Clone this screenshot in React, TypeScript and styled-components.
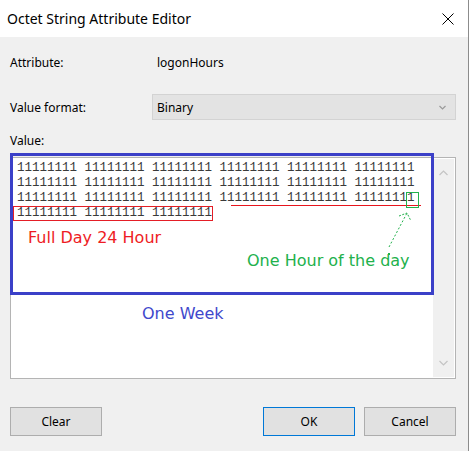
import React from "react";
import styled, { createGlobalStyle } from "styled-components";

const Global = createGlobalStyle`
  html, body { margin: 0; padding: 0; background: #ffffff; }
  body { width: 470px; height: 451px; overflow: hidden; }
`;

const Window = styled.div`
  position: relative;
  width: 468px;
  height: 451px;
  border-right: 1px solid #8c8c8c;
  display: flex;
  flex-direction: column;
  font-family: "Noto Sans", "Liberation Sans", sans-serif;
  font-size: 12px;
  color: #000;
`;

const TitleBar = styled.div`
  height: 37px;
  background: #ffffff;
  display: flex;
  align-items: center;
  justify-content: space-between;
  padding: 0 14px 0 7px;
  box-sizing: border-box;
`;

const Title = styled.div`
  font-size: 14px;
  color: #000;
`;

const Body = styled.div`
  flex: 1;
  background: #f0f0f0;
  padding: 16px 12px 0 10px;
  display: flex;
  flex-direction: column;
`;

const Row = styled.div<{ $h: number; $mb: number }>`
  display: flex;
  align-items: center;
  height: ${(p) => p.$h}px;
  margin-bottom: ${(p) => p.$mb}px;
`;

const Label = styled.div<{ $w?: number }>`
  width: ${(p) => p.$w ?? 147}px;
  flex: none;
`;

const Select = styled.div`
  flex: 1;
  height: 26px;
  box-sizing: border-box;
  border: 1px solid #d3d3d3;
  background: #e3e3e3;
  display: flex;
  align-items: center;
  justify-content: space-between;
  padding: 0 9px 0 4px;
`;

const Field = styled.div`
  height: 222px;
  box-sizing: border-box;
  border: 1px solid #b4b4b4;
  background: #fff;
  display: flex;
`;

const Content = styled.pre`
  flex: 1;
  margin: 0;
  padding: 3px 0 0 6px;
  font-family: "Liberation Mono", "Courier New", monospace;
  font-size: 12.5px;
  line-height: 15px;
  color: #3a3a3a;
  white-space: pre;
`;

const ScrollBar = styled.div`
  width: 21px;
  background: #f0f0f0;
  margin: 1px 1px 1px 0;
  display: flex;
  flex-direction: column;
  justify-content: space-between;
  align-items: center;
  padding: 11px 0;
  box-sizing: border-box;
`;

const Buttons = styled.div`
  display: flex;
  margin-top: 28px;
  gap: 9px;
`;

const Button = styled.div<{ $default?: boolean }>`
  width: 92px;
  height: 29px;
  box-sizing: border-box;
  border: 1px solid ${(p) => (p.$default ? "#0078d7" : "#adadad")};
  background: #e1e1e1;
  display: flex;
  align-items: center;
  justify-content: center;
`;

const Spacer = styled.div`
  flex: 1;
`;

const Note = styled.div<{ $x: number; $y: number; $c: string }>`
  position: absolute;
  left: ${(p) => p.$x}px;
  top: ${(p) => p.$y}px;
  color: ${(p) => p.$c};
  font-family: "DejaVu Sans", Verdana, sans-serif;
  font-size: 16px;
  line-height: 19px;
  white-space: nowrap;
`;

const Overlay = styled.svg`
  position: absolute;
  left: 0;
  top: 0;
  pointer-events: none;
`;

const Chevron = ({ up, color, w = 9 }: { up?: boolean; color: string; w?: number }) => (
  <svg width={w} height={Math.ceil(w / 2) + 1} viewBox={`0 0 ${w} ${Math.ceil(w / 2) + 1}`}>
    <path
      d={up ? `M0.5 ${w / 2 + 0.5} L${w / 2} 1 L${w - 0.5} ${w / 2 + 0.5}` : `M0.5 1 L${w / 2} ${w / 2 + 0.5} L${w - 0.5} 1`}
      fill="none"
      stroke={color}
      strokeWidth="1.2"
    />
  </svg>
);

const group = "11111111";
const line = [group, group, group, group, group, group].join(" ");
const text = [line, line, line, [group, group, group].join(" ")].join("\n");

export default function App() {
  return (
    <>
      <Global />
      <Window>
        <TitleBar>
          <Title>Octet String Attribute Editor</Title>
          <svg width="12" height="12" viewBox="0 0 12 12">
            <path d="M0.5 0.5 L11.5 11.5 M11.5 0.5 L0.5 11.5" stroke="#000" strokeWidth="1" />
          </svg>
        </TitleBar>
        <Body>
          <Row $h={18} $mb={23}>
            <Label>Attribute:</Label>
            <div>logonHours</div>
          </Row>
          <Row $h={26} $mb={11}>
            <Label $w={142}>Value format:</Label>
            <Select>
              <span>Binary</span>
              <Chevron color="#9a9a9a" w={7} />
            </Select>
          </Row>
          <Row $h={18} $mb={8}>
            <Label>Value:</Label>
          </Row>
          <Field>
            <Content>{text}</Content>
            <ScrollBar>
              <Chevron up color="#c4c4c4" />
              <Chevron color="#c4c4c4" />
            </ScrollBar>
          </Field>
          <Buttons>
            <Button>Clear</Button>
            <Spacer />
            <Button $default>OK</Button>
            <Button>Cancel</Button>
          </Buttons>
        </Body>
        <Overlay width="470" height="451" viewBox="0 0 470 451">
          <rect x="11.5" y="154.5" width="421" height="139" fill="none" stroke="#3b40c8" strokeWidth="3" />
          <rect x="13.5" y="206.5" width="199" height="14" fill="none" stroke="#e41e26" strokeWidth="1" shapeRendering="crispEdges" />
          <rect x="231" y="205" width="190" height="1.2" fill="#e8141c" shapeRendering="crispEdges" />
          <rect x="406.5" y="192.5" width="12" height="15" fill="none" stroke="#22b14c" strokeWidth="1" shapeRendering="crispEdges" />
          <line x1="389" y1="247" x2="407" y2="213" stroke="#22b14c" strokeWidth="1" strokeDasharray="2 2" />
          <path d="M399 216 L407 213 L411 221" fill="none" stroke="#22b14c" strokeWidth="1" strokeDasharray="2 1.5" />
          <rect x="388" y="253" width="2" height="2" fill="#22b14c" />
        </Overlay>
        <Note $x={28} $y={228} $c="#ee1c24">Full Day 24 Hour</Note>
        <Note $x={247} $y={251} $c="#22b14c">One Hour of the day</Note>
        <Note $x={142} $y={304} $c="#3f48cc">One Week</Note>
      </Window>
    </>
  );
}
